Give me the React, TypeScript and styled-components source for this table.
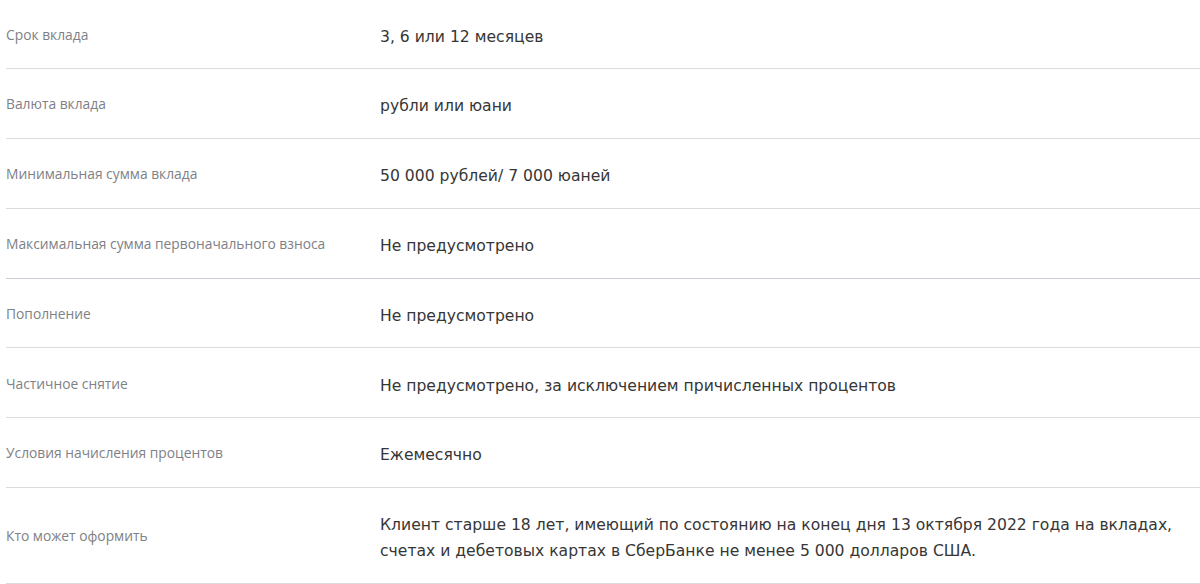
import React from "react";
import styled, { createGlobalStyle } from "styled-components";

const Global = createGlobalStyle`
  html, body { margin: 0; padding: 0; background: #fff; }
  body { width: 1200px; overflow: hidden; }
`;

const Table = styled.div`
  display: flex;
  flex-direction: column;
  margin-left: 6px;
  margin-top: -0.6px;
`;

const Row = styled.div<{ $strong?: boolean }>`
  display: grid;
  grid-template-columns: 374px 1fr;
  align-items: center;
  padding: 24.2px 0 18.6px;
  border-bottom: 1px solid ${(p) => (p.$strong ? "#c9ced6" : "#dcdcdc")};
`;

const Label = styled.div`
  font-family: "Open Sans", "Noto Sans", sans-serif;
  font-size: 13.8px;
  line-height: 26px;
  color: #7e8186;
  margin-top: -4px;
`;

const Value = styled.div`
  font-family: "DejaVu Sans", sans-serif;
  font-size: 15.6px;
  line-height: 26px;
  color: #363636;
`;

const rows: { label: string; value: React.ReactNode; strong?: boolean }[] = [
  { label: "Срок вклада", value: "3, 6 или 12 месяцев" },
  { label: "Валюта вклада", value: "рубли или юани" },
  { label: "Минимальная сумма вклада", value: "50 000 рублей/ 7 000 юаней" },
  { label: "Максимальная сумма первоначального взноса", value: "Не предусмотрено", strong: true },
  { label: "Пополнение", value: "Не предусмотрено" },
  { label: "Частичное снятие", value: "Не предусмотрено, за исключением причисленных процентов" },
  { label: "Условия начисления процентов", value: "Ежемесячно" },
  {
    label: "Кто может оформить",
    value: (
      <>
        Клиент старше 18 лет, имеющий по состоянию на конец дня 13 октября 2022 года на вкладах,
        <br />
        счетах и дебетовых картах в СберБанке не менее 5 000 долларов США.
      </>
    ),
  },
];

export default function App() {
  return (
    <>
      <Global />
      <Table>
        {rows.map((r) => (
          <Row key={r.label} $strong={r.strong}>
            <Label>{r.label}</Label>
            <Value>{r.value}</Value>
          </Row>
        ))}
      </Table>
    </>
  );
}
